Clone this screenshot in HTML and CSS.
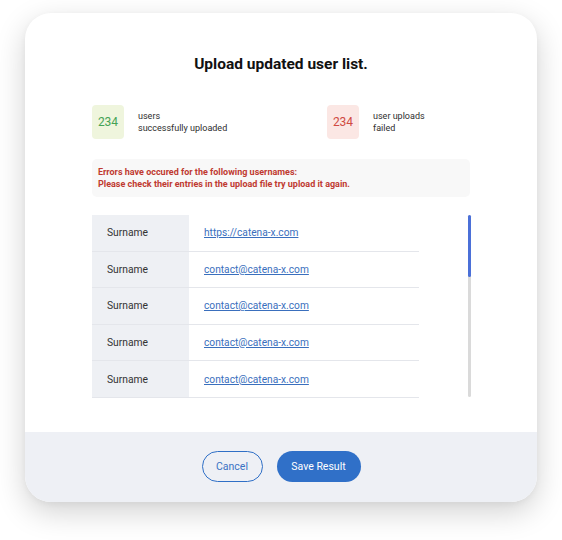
FILE: index.html
```html
<!DOCTYPE html>
<html lang="en">
<head>
<meta charset="utf-8">
<title>Upload updated user list</title>
<link rel="stylesheet" href="styles.css">
</head>
<body>
<div class="page">
  <div class="card">
    <div class="card-body">
      <h1 class="title">Upload updated user list.</h1>
      <div class="stats">
        <div class="stat">
          <div class="count count-ok">234</div>
          <div class="stat-label">users<br>successfully uploaded</div>
        </div>
        <div class="stat">
          <div class="count count-fail">234</div>
          <div class="stat-label">user uploads<br>failed</div>
        </div>
      </div>
      <div class="errors">Errors have occured for the following usernames:<br>Please check their entries in the upload file try upload it again.</div>
      <div class="list">
        <div class="rows">
          <div class="row"><div class="cell-name">Surname</div><div class="cell-value"><a href="#">https://catena-x.com</a></div></div>
          <div class="row"><div class="cell-name">Surname</div><div class="cell-value"><a href="#">contact@catena-x.com</a></div></div>
          <div class="row"><div class="cell-name">Surname</div><div class="cell-value"><a href="#">contact@catena-x.com</a></div></div>
          <div class="row"><div class="cell-name">Surname</div><div class="cell-value"><a href="#">contact@catena-x.com</a></div></div>
          <div class="row"><div class="cell-name">Surname</div><div class="cell-value"><a href="#">contact@catena-x.com</a></div></div>
        </div>
        <div class="scrollbar"><div class="scroll-thumb"></div></div>
      </div>
    </div>
    <div class="card-footer">
      <button class="btn btn-outline" type="button">Cancel</button>
      <button class="btn btn-primary" type="button">Save Result</button>
    </div>
  </div>
</div>
</body>
</html>
```

FILE: styles.css
```css
* { box-sizing: border-box; }

html, body {
  margin: 0;
  padding: 0;
  background: #ffffff;
}

body {
  font-family: Roboto, "Liberation Sans", Arial, sans-serif;
  color: #222;
}

.page {
  padding: 13px 25px 38px;
}

.card {
  width: 512px;
  background: #ffffff;
  border-radius: 26px;
  overflow: hidden;
  box-shadow: 0 10px 30px rgba(0, 0, 0, 0.18), 0 2px 6px rgba(0, 0, 0, 0.04);
}

.card-body {
  padding: 39px 67px 34px 67px;
}

.title {
  margin: 0;
  font-size: 15.5px;
  line-height: 24px;
  font-weight: 700;
  text-align: center;
  color: #111;
}

.stats {
  margin-top: 29px;
  display: grid;
  grid-template-columns: 235px 1fr;
}

.stat {
  display: flex;
  align-items: center;
  gap: 14px;
}

.count {
  width: 32px;
  height: 34px;
  border-radius: 4px;
  display: flex;
  align-items: center;
  justify-content: center;
  font-size: 12px;
}

.count-ok {
  background: #eff5dd;
  color: #45a355;
}

.count-fail {
  background: #fbe7e4;
  color: #d04a42;
}

.stat-label {
  font-size: 9px;
  line-height: 12px;
  color: #2e2e2e;
}

.errors {
  margin-top: 20px;
  background: #f8f8f8;
  border-radius: 5px;
  padding: 7px 6px;
  font-size: 9px;
  line-height: 12px;
  font-weight: 700;
  color: #bf3a31;
}

.list {
  margin-top: 18px;
  display: flex;
  justify-content: space-between;
}

.rows {
  width: 327px;
  display: grid;
  grid-auto-rows: 36.6px;
}

.row {
  display: grid;
  grid-template-columns: 97px 1fr;
  border-bottom: 1px solid #e4e6eb;
}

.cell-name {
  background: #eef0f4;
  display: flex;
  align-items: center;
  padding-left: 15px;
  font-size: 10.3px;
  color: #333;
}

.cell-value {
  display: flex;
  align-items: center;
  padding-left: 15px;
  font-size: 10.2px;
}

.cell-value a {
  color: #3a6fbd;
  text-decoration: underline;
}

.scrollbar {
  width: 3px;
  height: 182px;
  margin-right: -1px;
  background: #dadada;
  border-radius: 2px;
}

.scroll-thumb {
  height: 62px;
  background: #4b70d8;
  border-radius: 2px;
}

.card-footer {
  height: 70px;
  background: #eef0f5;
  display: flex;
  align-items: center;
  justify-content: center;
  gap: 14px;
}

.btn {
  height: 31px;
  border-radius: 16px;
  font-family: Roboto, "Liberation Sans", Arial, sans-serif;
  font-size: 10.5px;
  font-weight: 400;
  cursor: pointer;
}

.btn-outline {
  width: 61px;
  background: transparent;
  border: 1.5px solid #2f6fc6;
  color: #3a72c4;
}

.btn-primary {
  width: 84px;
  background: #3070c8;
  border: none;
  color: #ffffff;
}
```
